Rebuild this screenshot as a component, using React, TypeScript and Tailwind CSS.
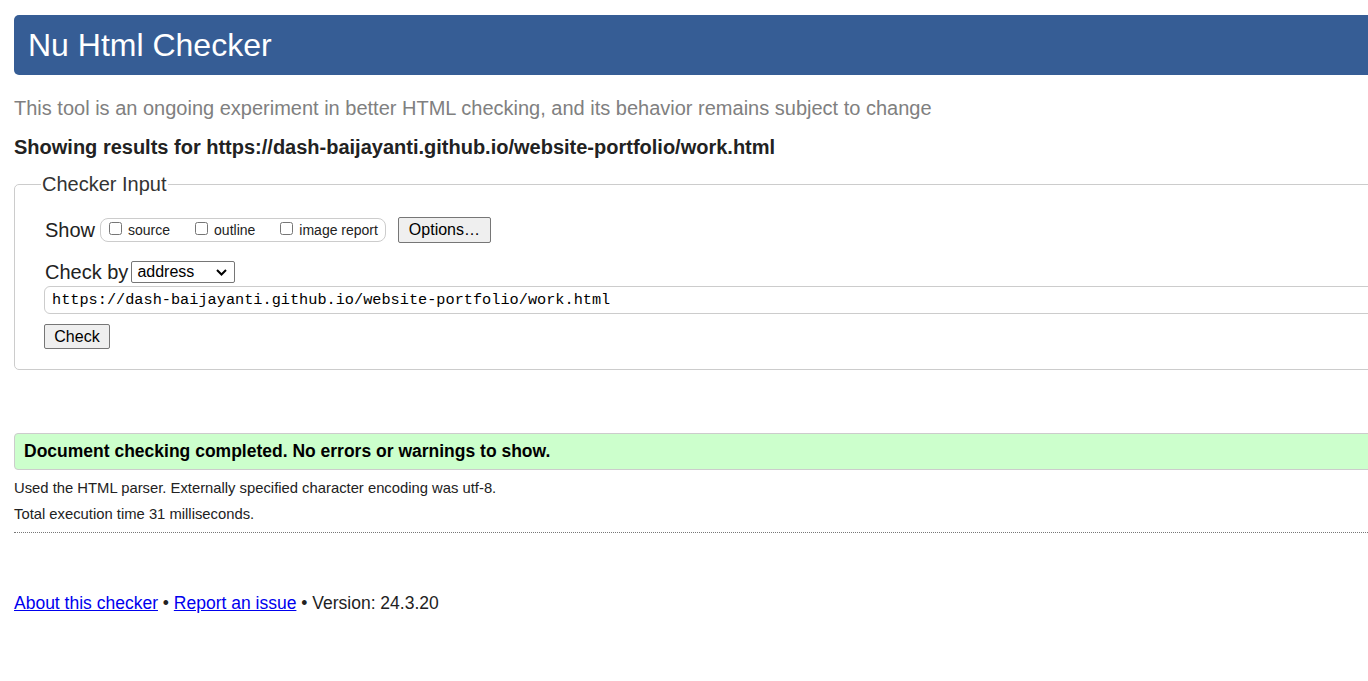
import React from "react";

export default function App() {
  return (
    <div
      className="w-[1368px] h-[681px] overflow-hidden bg-white text-[#222]"
      style={{ fontFamily: '"Liberation Sans", Arial, sans-serif' }}
    >
      <div className="w-[1600px] pl-[14px] pt-[15px]">
        <h1 className="h-[60px] rounded-[5px] bg-[#365d95] pl-[14px] flex items-center text-white text-[32px] leading-none">
          Nu Html Checker
        </h1>
        <p className="mt-[21px] text-[20px] leading-[24px] text-[#808080]">
          This tool is an ongoing experiment in better HTML checking, and its behavior remains subject to change
        </p>
        <p className="mt-[15px] text-[20px] leading-[24px] font-bold text-[#222]">
          Showing results for https://dash-baijayanti.github.io/website-portfolio/work.html
        </p>
        <fieldset className="mt-[13px] border border-[#ccc] rounded-[5px] pl-[30px] pb-[20px]">
          <legend className="ml-[-4px] px-[1px] text-[20px] leading-[24px] text-[#333]">Checker Input</legend>
          <div className="mt-[21px] flex items-center">
            <span className="text-[20px] leading-[24px]">Show</span>
            <div className="ml-[5px] h-[24px] border border-[#ccc] rounded-[8px] flex items-center pl-[8px] pr-[7px] text-[14px]">
              <label className="flex items-center">
                <input type="checkbox" className="w-[13px] h-[13px] m-0 mt-[-4px]" />
                <span className="ml-[6px]">source</span>
              </label>
              <label className="flex items-center ml-[25px]">
                <input type="checkbox" className="w-[13px] h-[13px] m-0 mt-[-4px]" />
                <span className="ml-[6px]">outline</span>
              </label>
              <label className="flex items-center ml-[25px]">
                <input type="checkbox" className="w-[13px] h-[13px] m-0 mt-[-4px]" />
                <span className="ml-[6px]">image report</span>
              </label>
            </div>
            <button className="ml-[12px] h-[26px] w-[93px] bg-[#efefef] border border-[#767676] rounded-[2px] text-[16px] text-black">
              Options…
            </button>
          </div>
          <div className="mt-[17px] flex items-center">
            <span className="text-[20px] leading-[24px]">Check by</span>
            <div className="ml-[3px] h-[22px] w-[104px] border border-[#767676] rounded-[2px] flex items-center justify-between pl-[5px] pr-[7px] text-[16px] text-black">
              <span>address</span>
              <svg width="11" height="7" viewBox="0 0 11 7" fill="none">
                <path d="M1 1l4.5 4.5L10 1" stroke="#000" strokeWidth="2" />
              </svg>
            </div>
          </div>
          <div className="mt-[2px] ml-[-1px] h-[28px] border border-[#ccc] rounded-[6px] flex items-center pl-[7px] text-[15.25px] text-black"
            style={{ fontFamily: '"Liberation Mono", monospace' }}>
            https://dash-baijayanti.github.io/website-portfolio/work.html
          </div>
          <div className="mt-[10px] ml-[-1px]">
            <button className="h-[25px] w-[66px] bg-[#efefef] border border-[#767676] rounded-[2px] text-[16px] text-black">
              Check
            </button>
          </div>
        </fieldset>
        <div className="mt-[63px] h-[37px] bg-[#ccffcc] border border-[#ccc] rounded-[4px] flex items-center pl-[9px] text-[17.5px] font-bold text-black">
          Document checking completed. No errors or warnings to show.
        </div>
        <p className="mt-[8px] text-[14.8px] leading-[20px]">
          Used the HTML parser. Externally specified character encoding was utf-8.
        </p>
        <p className="mt-[6px] text-[14.8px] leading-[20px]">Total execution time 31 milliseconds.</p>
        <div className="mt-[8px] border-b border-dotted border-[#777]" />
        <p className="mt-[59px] text-[17.5px] leading-[22px]">
          <a href="#" className="text-[#0000ee] underline">About this checker</a>
          {" • "}
          <a href="#" className="text-[#0000ee] underline">Report an issue</a>
          {" • Version: 24.3.20"}
        </p>
      </div>
    </div>
  );
}
